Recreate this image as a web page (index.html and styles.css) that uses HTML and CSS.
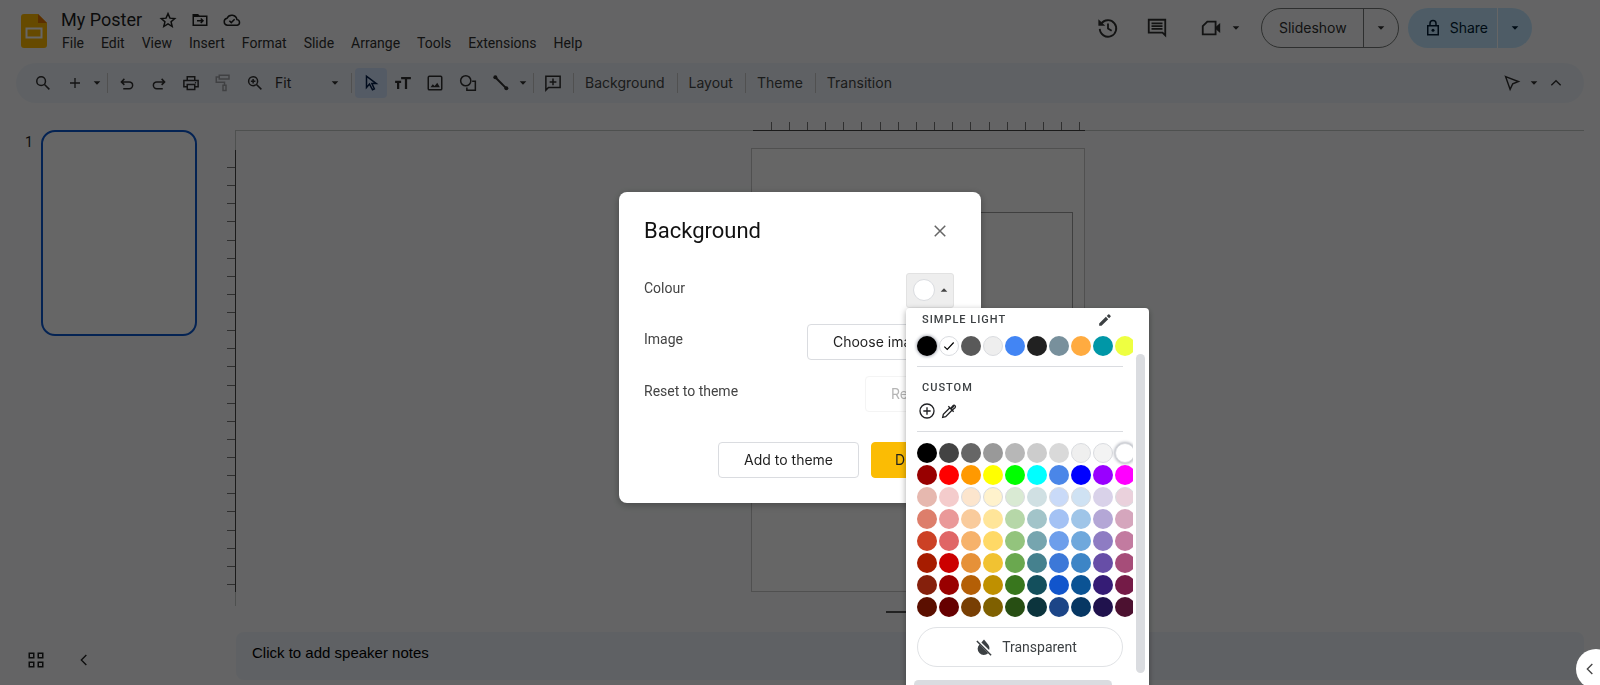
FILE: index.html
```html
<!DOCTYPE html>
<html lang="en-GB">
<head>
<meta charset="utf-8">
<title>My Poster</title>
<link rel="stylesheet" href="styles.css">
</head>
<body>
<svg class="defs" aria-hidden="true">
  <symbol id="caret" viewBox="0 0 24 24"><path class="solid" d="M4 8h16l-8 8z"/></symbol>
  <symbol id="star" viewBox="0 0 24 24"><path d="M12 3.500l2.600 6 6.400.6-4.900 4.300 1.500 6.300-5.600-3.400-5.600 3.400 1.500-6.300L3 10.100l6.400-.6z"/></symbol>
  <symbol id="move" viewBox="0 0 24 24"><path d="M3 5h6l2 2h10v12H3zM8 13h8M13 10l3 3-3 3"/><path class="solid" d="M3 5h6l2 3H3z"/></symbol>
  <symbol id="cloud" viewBox="0 0 24 24"><path d="M6 19a4.700 4.700 0 0 1-.6-9.300 7 7 0 0 1 13.200 1.800A3.800 3.800 0 0 1 19 19zM8.500 13l2.500 2.500 4.500-4.500"/></symbol>
  <symbol id="history" viewBox="0 0 24 24"><path d="M4.500 7.500A9 9 0 1 1 3 13M12 7v5.500l4 2.500"/><path class="solid" d="M1.500 2.500L9 9.500H1.500z"/></symbol>
  <symbol id="comment" viewBox="0 0 24 24"><path d="M3 3h18v17l-3-3H3zM6 7h12M6 10h12M6 13h12"/></symbol>
  <symbol id="camera" viewBox="0 0 24 24"><path d="M8 5h9v14H3V10z"/><path class="solid" d="M17 11l5-4.500v11L17 13z"/></symbol>
  <symbol id="lock" viewBox="0 0 24 24"><path d="M5 9h14v12H5zM8 9V6a4 4 0 0 1 8 0v3"/><circle class="solid" cx="12" cy="15" r="2"/></symbol>
  <symbol id="search" viewBox="0 0 24 24"><circle cx="9.500" cy="9.500" r="5.800"/><path d="M14 14l6.500 6.500"/></symbol>
  <symbol id="plus" viewBox="0 0 24 24"><path d="M12 4.500v15M4.500 12h15"/></symbol>
  <symbol id="undo" viewBox="0 0 24 24"><path d="M8.500 6.500l-4 4 4 4M5 10.500h10a4.500 4.500 0 0 1 0 9H7"/></symbol>
  <symbol id="redo" viewBox="0 0 24 24"><path d="M15.500 6.500l4 4-4 4M19 10.500H9a4.500 4.500 0 0 0 0 9h8"/></symbol>
  <symbol id="print" viewBox="0 0 24 24"><path d="M7 8V3.500h10V8M6 17H2.500V8.500h19V17H18M7 14h10v6.500H7z"/><circle class="solid" cx="18" cy="11.500" r="1"/></symbol>
  <symbol id="paint" viewBox="0 0 24 24"><path d="M7 1.500h13v5H7zM7 4H3v7h11v3.500M12 15h4v7h-4z"/></symbol>
  <symbol id="zoom" viewBox="0 0 24 24"><circle cx="9.500" cy="9.500" r="6"/><path d="M14 14l6.500 6.500M9.500 6.500v6M6.500 9.500h6"/></symbol>
  <symbol id="cursor" viewBox="0 0 24 24"><path d="M6 3v15l4-4.500L14 21l2.500-1.200-3.300-7H19z"/></symbol>
  <symbol id="text" viewBox="0 0 24 24"><path class="thick" d="M9.500 5.500h13M16 5.500V20M1.500 10.500h8M5.500 10.500V20"/></symbol>
  <symbol id="image" viewBox="0 0 24 24"><rect x="3" y="3" width="18" height="18" rx="1.500"/><path class="solid" d="M6 17.500l3-4 2.500 2.500 3.500-4.500 3.500 6z"/></symbol>
  <symbol id="shape" viewBox="0 0 24 24"><circle cx="9" cy="9" r="6.800"/><path d="M17.500 9.500h4.300v12H10.500V18"/></symbol>
  <symbol id="line" viewBox="0 0 24 24"><path class="thick" d="M3 3l17 17"/><circle class="solid" cx="3.500" cy="3.500" r="3"/><circle class="solid" cx="20" cy="20" r="3"/></symbol>
  <symbol id="addcomment" viewBox="0 0 24 24"><path d="M2.500 3h19v15H6l-3.500 3.500zM12 6v9M7.500 10.500h9"/></symbol>
  <symbol id="pointer" viewBox="0 0 24 24"><path d="M3.500 3.500l17 6.500-7.500 3-3.500 7.500z"/></symbol>
  <symbol id="up" viewBox="0 0 24 24"><path d="M5 15.500L12 8.500l7 7"/></symbol>
  <symbol id="left" viewBox="0 0 24 24"><path d="M15.500 4.500L8 12l7.500 7.500"/></symbol>
  <symbol id="grid" viewBox="0 0 24 24"><path d="M3 3h6v6H3zM15 3h6v6h-6zM3 15h6v6H3zM15 15h6v6h-6z"/></symbol>
  <symbol id="close" viewBox="0 0 24 24"><path d="M5 5l14 14M19 5L5 19"/></symbol>
  <symbol id="pencil" viewBox="0 0 24 24"><path class="solid" d="M2 18v4h4L17.500 10.500l-4-4zM21.500 6.500a1.500 1.500 0 0 0 0-2l-2-2a1.500 1.500 0 0 0-2 0L15 5l4 4z"/></symbol>
  <symbol id="circleplus" viewBox="0 0 24 24"><circle cx="12" cy="12" r="10.500"/><path d="M12 6.500v11M6.500 12h11"/></symbol>
  <symbol id="dropper" viewBox="0 0 24 24"><path d="M13 7.500L3.500 17l-1 4.500 4.500-1L16.500 11M11 5l8 8M15 9l4.500-4.500"/><path d="M14.500 8l3.500-4c2-2 5 1 3 3l-4 3.500"/></symbol>
  <symbol id="nofill" viewBox="0 0 24 24"><path class="solid" d="M12 2l5.500 6.500c2 2.500 2 5 1.300 7.500L8.500 6zM6 8.500l11.500 11.800A7.500 7.500 0 0 1 6 8.500z"/><path d="M2.500 4l19 19"/></symbol>
  <symbol id="tick" viewBox="0 0 24 24"><path d="M4 13l5 5L20 6"/></symbol>
</svg>

<div class="app">
  <header class="header">
    <svg class="logo" viewBox="0 0 26 34" aria-hidden="true"><path class="logo-page" d="M3 0h14l9 9v22a3 3 0 0 1-3 3H3a3 3 0 0 1-3-3V3a3 3 0 0 1 3-3z"/><path class="logo-fold" d="M17 0l9 9h-9z"/><path class="logo-frame" d="M5.500 14.500h15v9h-15z"/></svg>
    <div class="document">
      <div class="title-row">
        <input class="title" aria-label="Document name" value="My Poster">
        <button class="icon-button" aria-label="Star"><svg class="icon"><use href="#star"/></svg></button>
        <button class="icon-button" aria-label="Move"><svg class="icon"><use href="#move"/></svg></button>
        <button class="icon-button" aria-label="Document status"><svg class="icon"><use href="#cloud"/></svg></button>
      </div>
      <nav class="menus">
        <button>File</button><button>Edit</button><button>View</button><button>Insert</button><button>Format</button><button>Slide</button><button>Arrange</button><button>Tools</button><button>Extensions</button><button>Help</button>
      </nav>
    </div>
    <div class="actions">
      <button class="action" aria-label="Version history"><svg class="icon large"><use href="#history"/></svg></button>
      <button class="action" aria-label="Comments"><svg class="icon large"><use href="#comment"/></svg></button>
      <button class="action call" aria-label="Join a call"><svg class="icon large"><use href="#camera"/></svg><svg class="caret"><use href="#caret"/></svg></button>
      <div class="pill slideshow"><button class="pill-main">Slideshow</button><button class="pill-more" aria-label="Slideshow options"><svg class="caret"><use href="#caret"/></svg></button></div>
      <div class="pill share"><button class="pill-main"><svg class="icon"><use href="#lock"/></svg>Share</button><button class="pill-more" aria-label="Share options"><svg class="caret"><use href="#caret"/></svg></button></div>
    </div>
  </header>

  <div class="toolbar" role="toolbar">
    <button class="tool" aria-label="Search menus"><svg class="icon"><use href="#search"/></svg></button>
    <button class="tool" aria-label="New slide"><svg class="icon small"><use href="#plus"/></svg></button>
    <button class="drop" aria-label="New slide layouts"><svg class="caret"><use href="#caret"/></svg></button>
    <span class="divider"></span>
    <button class="tool" aria-label="Undo"><svg class="icon"><use href="#undo"/></svg></button>
    <button class="tool" aria-label="Redo"><svg class="icon"><use href="#redo"/></svg></button>
    <button class="tool" aria-label="Print"><svg class="icon"><use href="#print"/></svg></button>
    <button class="tool" aria-label="Paint format" disabled><svg class="icon"><use href="#paint"/></svg></button>
    <button class="tool" aria-label="Zoom"><svg class="icon"><use href="#zoom"/></svg></button>
    <div class="zoom-level"><select aria-label="Zoom level"><option>Fit</option></select><svg class="caret"><use href="#caret"/></svg></div>
    <span class="divider"></span>
    <button class="tool selected" aria-label="Select"><svg class="icon"><use href="#cursor"/></svg></button>
    <button class="tool" aria-label="Text box"><svg class="icon"><use href="#text"/></svg></button>
    <button class="tool" aria-label="Image"><svg class="icon"><use href="#image"/></svg></button>
    <button class="tool shape" aria-label="Shape"><svg class="icon"><use href="#shape"/></svg></button>
    <button class="tool" aria-label="Line"><svg class="icon small"><use href="#line"/></svg></button>
    <button class="drop" aria-label="Line types"><svg class="caret"><use href="#caret"/></svg></button>
    <span class="divider"></span>
    <button class="tool" aria-label="Add comment"><svg class="icon"><use href="#addcomment"/></svg></button>
    <span class="divider"></span>
    <button class="tool-text">Background</button>
    <span class="divider"></span>
    <button class="tool-text">Layout</button>
    <span class="divider"></span>
    <button class="tool-text">Theme</button>
    <span class="divider"></span>
    <button class="tool-text">Transition</button>
    <div class="toolbar-end">
      <button class="tool" aria-label="Mode"><svg class="icon"><use href="#pointer"/></svg></button>
      <button class="drop" aria-label="Mode options"><svg class="caret"><use href="#caret"/></svg></button>
      <button class="tool" aria-label="Hide menus"><svg class="icon small"><use href="#up"/></svg></button>
    </div>
  </div>

  <div class="workspace">
    <aside class="filmstrip">
      <div class="slide-item"><span>1</span><button class="thumb" aria-label="Slide 1"></button></div>
      <div class="view-controls">
        <button class="icon-button" aria-label="Grid view"><svg class="icon"><use href="#grid"/></svg></button>
        <button class="icon-button" aria-label="Hide filmstrip"><svg class="icon small"><use href="#left"/></svg></button>
      </div>
    </aside>
    <main class="editor">
      <div class="ruler-top"><div class="ticks" data-count="18"></div></div>
      <div class="stage">
        <div class="ruler-side"><div class="ticks" data-count="24"></div></div>
        <div class="page"><div class="placeholder"></div></div>
      </div>
      <div class="handle"></div>
      <textarea class="notes" aria-label="Speaker notes">Click to add speaker notes</textarea>
    </main>
  </div>
</div>

<div class="scrim">
  <section class="dialog" role="dialog" aria-labelledby="dialog-title">
    <div class="dialog-head"><h1 id="dialog-title">Background</h1><button class="icon-button" aria-label="Close"><svg class="icon"><use href="#close"/></svg></button></div>
    <div class="field">
      <span id="colour-label">Colour</span>
      <div class="colour">
        <button class="colour-button" aria-labelledby="colour-label"><span class="current"></span><svg class="caret flipped"><use href="#caret"/></svg></button>
        <div class="picker">
          <div class="picker-body">
            <div class="picker-head"><h2>SIMPLE LIGHT</h2><button class="icon-button" aria-label="Edit theme colours"><svg class="icon tiny"><use href="#pencil"/></svg></button></div>
            <div class="swatches theme" id="theme-colours"></div>
            <hr>
            <h2 class="custom-title">CUSTOM</h2>
            <div class="custom-tools"><button class="icon-button" aria-label="Add custom colour"><svg class="icon"><use href="#circleplus"/></svg></button><button class="icon-button" aria-label="Pick a colour"><svg class="icon"><use href="#dropper"/></svg></button></div>
            <hr>
            <div class="swatches standard" id="standard-colours"></div>
            <button class="transparent"><svg class="icon"><use href="#nofill"/></svg>Transparent</button>
            <div class="scroll-x"></div>
          </div>
          <div class="scroll-y"></div>
        </div>
      </div>
    </div>
    <div class="field"><span>Image</span><button class="outlined">Choose image</button></div>
    <div class="field"><span>Reset to theme</span><button class="outlined" disabled>Reset</button></div>
    <div class="dialog-actions"><button class="outlined">Add to theme</button><button class="filled">Done</button></div>
  </section>
</div>
<button class="side-toggle" aria-label="Show side panel"><svg class="icon small"><use href="#left"/></svg></button>
<script src="script.js"></script>
</body>
</html>
```
FILE: styles.css
```css
* { box-sizing: border-box; }
body { margin: 0; height: 100vh; overflow: hidden; background: #f9fbfd; color: #1f1f1f; font: 14px/20px Roboto, sans-serif; }
button, input, select, textarea { margin: 0; padding: 0; border: 0; background: none; color: inherit; font: inherit; }
svg { display: block; flex: none; fill: none; stroke: currentColor; stroke-width: 2; }
.defs { position: absolute; width: 0; height: 0; }
.solid { fill: currentColor; stroke: none; }
.thick { stroke-width: 3; }
.icon { width: 18px; height: 18px; }
.icon.small { width: 16px; height: 16px; }
.icon.tiny { width: 14px; height: 14px; }
.icon.large { width: 22px; height: 22px; }
.caret { width: 10px; height: 10px; }
.icon-button { display: flex; }

.app { display: flex; flex-direction: column; height: 100%; }
.header { display: flex; padding: 7px 68px 0 21px; height: 63px; flex: none; }
.logo { width: 26px; height: 34px; margin-top: 7px; }
.logo-page { fill: #ffba00; stroke: none; }
.logo-fold { fill: #e37400; stroke: none; }
.logo-frame { stroke: #fff; }
.document { margin-left: 14px; }
.title-row { display: flex; align-items: center; gap: 14px; height: 25px; }
.title { width: 84px; font-size: 18px; line-height: 24px; }
.menus { display: flex; gap: 17px; margin-top: 1px; padding-left: 1px; color: #303030; }
.actions { display: flex; margin: 1px 0 0 auto; height: 40px; align-items: center; color: #303030; }
.action { display: flex; align-items: center; width: 49px; }
.action.call { width: 61px; gap: 9px; margin-left: 5px; }
.pill { display: flex; height: 40px; border-radius: 20px; font: 14px/20px Inter, sans-serif; }
.pill-main { display: flex; align-items: center; gap: 8px; }
.pill-more { display: flex; align-items: center; justify-content: center; width: 35px; }
.slideshow { border: 1px solid #747775; margin-right: 9px; }
.slideshow .pill-main { padding: 0 16px 0 17px; }
.slideshow .pill-more { border-left: 1px solid #747775; }
.share { background: #c2e7ff; color: #001d35; }
.share .pill-main { padding: 0 9px 0 16px; }
.share .pill-more { border-left: 1px solid #fff; }

.toolbar { display: flex; flex: none; align-items: center; height: 40px; margin: 0 16px; padding: 0 12px 0 11px; border-radius: 20px; background: #eef2fa; color: #303030; }
.tool { display: flex; align-items: center; justify-content: center; width: 32px; height: 30px; }
.tool:disabled { opacity: .4; }
.tool.selected { width: 32px; border-radius: 4px; background: #d3e3fd; color: #041e49; }
.tool.shape { width: 34px; }
.drop { display: flex; justify-content: center; width: 12px; }
.divider { width: 1px; height: 20px; margin: 0 3px 0 4px; background: #c7c7c7; }
.zoom-level { display: flex; align-items: center; width: 76px; font: 14px/20px Inter, sans-serif; }
.zoom-level select { appearance: none; width: 59px; padding-left: 4px; }
.tool-text { padding: 0 8px; font: 14px/20px Inter, sans-serif; color: #444746; }
.toolbar-end { display: flex; align-items: center; margin-left: auto; }

.workspace { display: flex; flex: 1; min-height: 0; }
.filmstrip { display: flex; flex-direction: column; justify-content: space-between; width: 235px; padding: 27px 0 16px 25px; }
.slide-item { display: flex; gap: 8px; font-size: 14px; line-height: 24px; }
.thumb { width: 156px; height: 206px; border: 2px solid #0b57d0; border-radius: 14px; background: #fff; }
.view-controls { display: flex; align-items: center; gap: 31px; padding-left: 2px; }
.editor { display: flex; flex: 1; flex-direction: column; }
.ruler-top { display: flex; flex: none; justify-content: center; height: 28px; margin-right: 16px; padding-left: 18px; border-bottom: 1px solid #c4c7c5; }
.ticks { display: flex; justify-content: space-between; }
.ruler-top .ticks { align-items: flex-end; width: 332px; height: 28px; padding: 0 4px 0 18px; border-bottom: 1px solid #444; }
.ruler-top .tick { width: 1px; height: 8px; background: #777; }
.stage { position: relative; display: flex; flex: 1; justify-content: center; min-height: 0; margin-bottom: 19px; padding: 17px 0 14px; border-left: 1px solid #c4c7c5; }
.ruler-side { position: absolute; top: 19px; bottom: 14px; right: 100%; display: flex; }
.ruler-side .ticks { flex-direction: column; width: 9px; padding: 17px 0 7px; border-right: 1px solid #444; }
.ruler-side .tick { width: 8px; height: 1px; background: #777; }
.page { width: 334px; padding: 63px 11px; border: 1px solid #c7c7c7; background: #fff; }
.placeholder { height: 200px; border: 1px solid #9e9e9e; }
.handle { align-self: center; width: 48px; height: 2px; margin: -14px 16px 19px 0; background: #555; }
.notes { display: block; height: 48px; margin: 0 16px 5px 1px; padding: 11px 16px; resize: none; border-radius: 8px; background: #eef2fa; color: #000; font: 15px/20px "Liberation Sans", sans-serif; overflow: hidden; }

.scrim { position: fixed; inset: 0; display: flex; align-items: center; justify-content: center; padding-top: 9px; background: rgba(0, 0, 0, .6); }
.dialog { width: 362px; padding: 24px 27px 25px 25px; border-radius: 8px; background: #fff; box-shadow: 0 2px 8px rgba(0, 0, 0, .3); color: #444; }
.dialog-head { display: flex; justify-content: space-between; align-items: center; height: 30px; padding-right: 5px; margin-bottom: 27px; color: #666; }
.dialog-head h1 { margin: 0; color: #111; font: 400 22px/30px Roboto, sans-serif; }
.field { display: flex; justify-content: space-between; align-items: flex-start; height: 36px; margin-bottom: 15px; line-height: 30px; }
.field + .field + .field { margin-top: 16px; }
.outlined, .filled { height: 36px; padding: 0 25px; border: 1px solid #dadce0; border-radius: 4px; color: #1f1f1f; font: 14px/20px Inter, sans-serif; white-space: nowrap; }
.outlined:disabled { border-color: #f4f4f4; color: #b5b5b5; }
.filled { width: 83px; padding: 0 20px; border-color: #fbbc04; background: #fbbc04; }
.dialog-actions { display: flex; justify-content: flex-end; gap: 12px; margin-top: 30px; }
.colour { position: relative; }
.colour-button { display: flex; align-items: center; gap: 4px; width: 48px; height: 35px; padding-left: 6px; border: 1px solid #e2e2e2; border-radius: 3px; background: #eee; }
.current { width: 22px; height: 22px; border: 1px solid #dadce0; border-radius: 50%; background: #fff; }
.flipped { transform: rotate(180deg); }
.picker { position: absolute; top: 35px; left: 0; display: flex; justify-content: space-between; width: 243px; height: 400px; padding: 2px 4px 0 8px; border-radius: 4px; background: #fff; box-shadow: 0 2px 6px rgba(0, 0, 0, .35); line-height: 20px; }
.picker-body { width: 219px; padding-left: 3px; overflow: hidden; }
.picker-head { display: flex; justify-content: space-between; align-items: center; height: 20px; padding: 0 21px 0 5px; color: #3c4043; }
.picker h2 { margin: 0; color: #3c4043; font: 500 11px/16px Roboto, sans-serif; letter-spacing: 1px; }
.picker hr { width: 206px; height: 1px; margin: 10px 0 11px; border: 0; background: #dadce0; }
.swatches { display: grid; grid-template-columns: repeat(10, 20px); gap: 2px; }
.swatches.theme { margin-top: 6px; }
.swatch { display: flex; align-items: center; justify-content: center; width: 20px; height: 20px; border-radius: 50%; color: #000; }
.swatch.light { border: 1px solid #dadce0; }
.swatch.focus { box-shadow: 0 0 3px 1px #b5b8c0; }
.picker .custom-title { padding: 2px 0 5px 5px; }
.custom-tools { display: flex; align-items: center; gap: 6px; height: 20px; padding-left: 2px; color: #202124; }
.custom-tools .icon { width: 16px; height: 16px; }
.transparent { display: flex; align-items: center; justify-content: center; gap: 9px; width: 206px; height: 40px; margin: 10px 0 13px; padding-left: 12px; border: 1px solid #e0e2e5; border-radius: 20px; color: #3c4043; font: 14px/20px Roboto, sans-serif; }
.scroll-x { width: 198px; height: 9px; margin-left: -3px; border-radius: 5px; background: #dadce0; }
.scroll-y { width: 9px; height: 319px; margin-top: 44px; border-radius: 5px; background: #dadce0; }
.side-toggle { position: fixed; right: -16px; bottom: -4px; display: flex; align-items: center; width: 40px; height: 40px; padding-left: 6px; border-radius: 50%; background: #fff; color: #444; }
```
FILE: script.js
```js
const themeColours = '000000 ffffff 595959 eeeeee 4285f4 212121 78909c ffab40 0097a7 eeff41';
const standardColours = `
000000 434343 666666 999999 b7b7b7 cccccc d9d9d9 efefef f3f3f3 ffffff
980000 ff0000 ff9900 ffff00 00ff00 00ffff 4a86e8 0000ff 9900ff ff00ff
e6b8af f4cccc fce5cd fff2cc d9ead3 d0e0e3 c9daf8 cfe2f3 d9d2e9 ead1dc
dd7e6b ea9999 f9cb9c ffe599 b6d7a8 a2c4c9 a4c2f4 9fc5e8 b4a7d6 d5a6bd
cc4125 e06666 f6b26b ffd966 93c47d 76a5af 6d9eeb 6fa8dc 8e7cc3 c27ba0
a61c00 cc0000 e69138 f1c232 6aa84f 45818e 3c78d8 3d85c6 674ea7 a64d79
85200c 990000 b45f06 bf9000 38761d 134f5c 1155cc 0b5394 351c75 741b47
5b0f00 660000 783f04 7f6000 274e13 0c343d 1c4587 073763 20124d 4c1130`;

function fill(id, colours) {
  const box = document.getElementById(id);
  colours.trim().split(/\s+/).forEach((hex, i) => {
    const swatch = document.createElement('button');
    swatch.className = 'swatch';
    swatch.setAttribute('aria-label', '#' + hex);
    swatch.style.background = '#' + hex;
    const sum = [0, 2, 4].reduce((t, k) => t + parseInt(hex.substr(k, 2), 16), 0);
    if (sum > 660) swatch.classList.add('light');
    if (id === 'theme-colours' && i === 0) swatch.classList.add('focus');
    if (id === 'standard-colours' && hex === 'ffffff') swatch.classList.add('focus');
    if (id === 'theme-colours' && i === 1) swatch.innerHTML = '<svg class="icon tiny"><use href="#tick"/></svg>';
    box.append(swatch);
  });
}
fill('theme-colours', themeColours);
fill('standard-colours', standardColours);

document.querySelectorAll('.ticks').forEach((ruler) => {
  for (let i = 0; i < Number(ruler.dataset.count); i++) {
    const tick = document.createElement('span');
    tick.className = 'tick';
    ruler.append(tick);
  }
});
```
